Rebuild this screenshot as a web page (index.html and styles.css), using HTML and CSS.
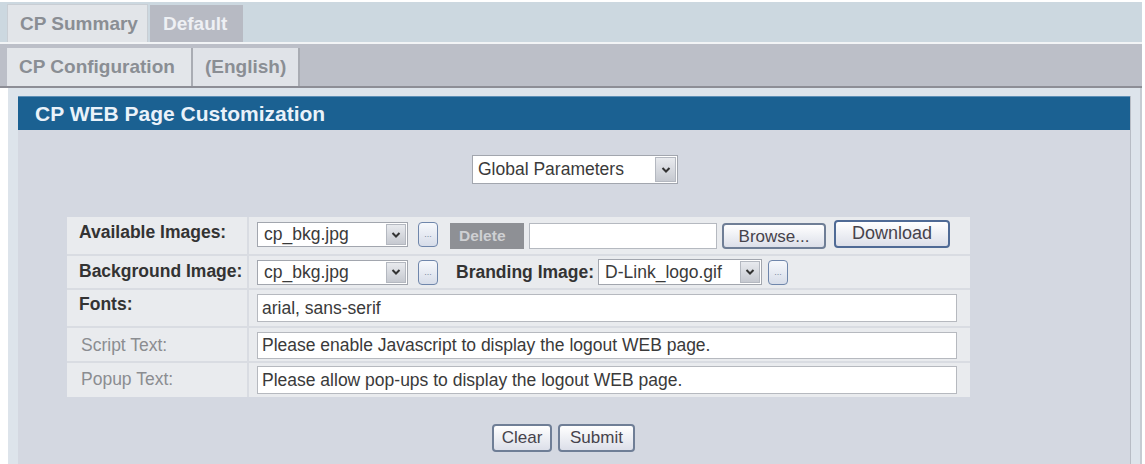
FILE: index.html
```html
<!DOCTYPE html>
<html>
<head>
<meta charset="utf-8">
<link rel="stylesheet" href="styles.css">
</head>
<body>
<div class="page">
  <div class="tabrow top">
    <div class="tab tab-summary">CP Summary</div>
    <div class="tab tab-default">Default</div>
  </div>
  <div class="tabrow sub">
    <div class="tab tab-config">CP Configuration</div>
    <div class="tab tab-lang">(English)</div>
  </div>
  <div class="panel">
    <div class="panel-inner">
      <div class="panel-head">CP WEB Page Customization</div>
      <div class="panel-body">
        <div class="center-row">
          <div class="sel sel-global"><span class="sel-text">Global Parameters</span><span class="sel-arrow"><svg width="10" height="8" viewBox="0 0 10 8"><path d="M1.5 2 L5 5.5 L8.5 2" fill="none" stroke="#333" stroke-width="2"/></svg></span></div>
        </div>
        <div class="form">
          <div class="row r1">
            <div class="lbl">Available Images:</div>
            <div class="val">
              <div class="sel sel-img"><span class="sel-text">cp_bkg.jpg</span><span class="sel-arrow"><svg width="10" height="8" viewBox="0 0 10 8"><path d="M1.5 2 L5 5.5 L8.5 2" fill="none" stroke="#333" stroke-width="2"/></svg></span></div>
              <span class="dots">...</span>
              <span class="btn-delete">Delete</span>
              <span class="file-input"></span>
              <span class="btn btn-browse">Browse...</span>
              <span class="btn btn-download">Download</span>
            </div>
          </div>
          <div class="row r2">
            <div class="lbl">Background Image:</div>
            <div class="val">
              <div class="sel sel-img"><span class="sel-text">cp_bkg.jpg</span><span class="sel-arrow"><svg width="10" height="8" viewBox="0 0 10 8"><path d="M1.5 2 L5 5.5 L8.5 2" fill="none" stroke="#333" stroke-width="2"/></svg></span></div>
              <span class="dots">...</span>
              <span class="inline-lbl">Branding Image:</span>
              <div class="sel sel-brand"><span class="sel-text">D-Link_logo.gif</span><span class="sel-arrow"><svg width="10" height="8" viewBox="0 0 10 8"><path d="M1.5 2 L5 5.5 L8.5 2" fill="none" stroke="#333" stroke-width="2"/></svg></span></div>
              <span class="dots dots-brand">...</span>
            </div>
          </div>
          <div class="row r3">
            <div class="lbl">Fonts:</div>
            <div class="val"><div class="text-input">arial, sans-serif</div></div>
          </div>
          <div class="row r4">
            <div class="lbl lbl-dim">Script Text:</div>
            <div class="val"><div class="text-input">Please enable Javascript to display the logout WEB page.</div></div>
          </div>
          <div class="row r5">
            <div class="lbl lbl-dim">Popup Text:</div>
            <div class="val"><div class="text-input">Please allow pop-ups to display the logout WEB page.</div></div>
          </div>
        </div>
        <div class="actions">
          <span class="btn btn-clear">Clear</span>
          <span class="btn btn-submit">Submit</span>
        </div>
      </div>
    </div>
  </div>
</div>
</body>
</html>
```
FILE: styles.css
```css
html, body {
  margin: 0;
  padding: 0;
  background: #ffffff;
}
body {
  font-family: "Liberation Sans", Arial, sans-serif;
  width: 1145px;
  height: 464px;
  overflow: hidden;
}
.page {
  width: 1142px;
}
.tabrow {
  display: flex;
  align-items: flex-end;
  padding-left: 7px;
}
.tabrow.top {
  margin-top: 2px;
  height: 40px;
  background: #ccd8e0;
  border-bottom: 2px solid #f2f4f6;
}
.tabrow.sub {
  height: 42px;
  background: #bcbfc8;
  border-bottom: 2px solid #8d8e96;
}
.tab {
  box-sizing: border-box;
  font-weight: bold;
  font-size: 19px;
  display: flex;
  align-items: center;
  padding-left: 12px;
  white-space: nowrap;
}
.tab-summary {
  width: 141px;
  height: 38px;
  background: #e2e5e9;
  color: #8a8e94;
  border: 1px solid #c9ced4;
  border-bottom: none;
}
.tab-default {
  width: 93px;
  height: 37px;
  margin-left: 2px;
  background: #b7bac3;
  color: #eef0f4;
  padding-left: 13px;
}
.tab-config {
  width: 186px;
  height: 38px;
  background: #e3e6ea;
  color: #8a8e94;
  border-right: 2px solid #a9acb3;
}
.tab-lang {
  width: 107px;
  height: 38px;
  background: #e0e3e8;
  color: #8a8e94;
  border-right: 2px solid #a9acb3;
  padding-left: 12px;
}
.panel {
  margin-left: 8px;
  background: #dde4eb;
  padding: 8px 9px 0 10px;
  height: 376px;
  box-sizing: border-box;
  border-right: 2px solid #c6cbd2;
}
.panel-inner {
  background: #d4d8e1;
  height: 100%;
  border-right: 1px solid #b7bcc4;
}
.panel-head {
  height: 33px;
  background: #1b6192;
  color: #eaf2fa;
  font-weight: bold;
  font-size: 21px;
  display: flex;
  align-items: center;
  padding-left: 17px;
  border-top: 1px solid #5d8fb6;
  white-space: nowrap;
}
.panel-body {
  padding-top: 25px;
}
.center-row {
  display: flex;
  padding-left: 454px;
}
.sel {
  display: inline-flex;
  box-sizing: border-box;
  background: #ffffff;
  border: 1px solid #a2a6ae;
  align-items: stretch;
  font-size: 17.5px;
  color: #3a3a3a;
  flex-shrink: 0;
}
.sel-text {
  flex: 1;
  display: flex;
  align-items: center;
  padding-left: 6px;
  white-space: nowrap;
  overflow: hidden;
}
.sel-arrow {
  width: 18px;
  display: flex;
  align-items: center;
  justify-content: center;
  background: linear-gradient(#e8eaee, #c6c9d0);
  border: 1px solid #b4b8c0;
  margin: 1px;
}
.sel-global {
  width: 206px;
  height: 29px;
}
.sel-global .sel-text {
  padding-left: 5px;
}
.sel-global .sel-arrow {
  width: 19px;
  margin-left: 2px;
}
.form {
  margin-top: 33px;
  margin-left: 49px;
  width: 903px;
  display: flex;
  flex-direction: column;
  gap: 2px;
  background: #d9dce2;
}
.row {
  display: flex;
  gap: 2px;
}
.lbl {
  width: 180px;
  flex-shrink: 0;
  box-sizing: border-box;
  padding-left: 12px;
  padding-top: 5px;
  font-weight: bold;
  font-size: 17.5px;
  color: #333;
  background: #e9ebee;
  white-space: nowrap;
}
.lbl-dim {
  font-weight: normal;
  color: #8b8d91;
  padding-left: 14px;
}
.val {
  flex: 1;
  display: flex;
  align-items: center;
  padding-left: 8px;
  background: #e9ebee;
}
.r1 { height: 37px; }
.r2 { height: 32px; }
.r3 { height: 36px; }
.r4 { height: 33px; }
.r5 { height: 34px; }
.r3 .lbl { padding-top: 4px; }
.r4 .lbl { padding-top: 7px; }
.r5 .lbl { padding-top: 6px; }
.sel-img {
  width: 151px;
  height: 25px;
}
.r1 .sel-img {
  margin-top: -2px;
}
.dots {
  box-sizing: border-box;
  width: 20px;
  height: 25px;
  margin-left: 10px;
  border: 1px solid #6f86ab;
  border-radius: 4px;
  background: linear-gradient(#f6f8fc, #d7dde9);
  font-size: 9px;
  color: #7d88a0;
  display: flex;
  align-items: center;
  justify-content: center;
  line-height: 1;
  flex-shrink: 0;
}
.r1 .dots {
  margin-top: -2px;
}
.btn-delete {
  margin-left: 12px;
  width: 74px;
  height: 26px;
  background: #8e9095;
  color: #cfd0d3;
  font-weight: bold;
  font-size: 15.5px;
  display: flex;
  align-items: center;
  padding-left: 9px;
  box-sizing: border-box;
  flex-shrink: 0;
}
.file-input {
  margin-left: 5px;
  width: 188px;
  height: 26px;
  box-sizing: border-box;
  background: #ffffff;
  border: 1px solid #b5b9c0;
  flex-shrink: 0;
}
.btn {
  box-sizing: border-box;
  display: inline-flex;
  align-items: center;
  justify-content: center;
  border: 2px solid #6f7e96;
  border-radius: 4px;
  background: linear-gradient(#ffffff, #dcdfe9);
  font-size: 17px;
  color: #46434c;
  flex-shrink: 0;
  white-space: nowrap;
}
.btn-browse {
  margin-left: 5px;
  width: 104px;
  height: 26px;
  padding-top: 2px;
}
.btn-download {
  margin-left: 8px;
  width: 116px;
  height: 28px;
  margin-top: -4px;
  border-color: #4f6a95;
  font-size: 18px;
}
.inline-lbl {
  margin-left: 18px;
  font-weight: bold;
  font-size: 17.5px;
  color: #333;
  margin-right: 4px;
  white-space: nowrap;
}
.sel-brand {
  width: 164px;
  height: 26px;
}
.sel-brand .sel-text {
  padding-left: 6px;
}
.dots-brand {
  margin-left: 6px;
}
.text-input {
  box-sizing: border-box;
  width: 700px;
  height: 28px;
  background: #ffffff;
  border: 1px solid #b6b9bf;
  font-size: 17.5px;
  color: #3a3a3a;
  display: flex;
  align-items: center;
  padding-left: 4px;
  white-space: nowrap;
  overflow: hidden;
}
.r4 .text-input {
  height: 27px;
  margin-top: 2px;
}
.actions {
  display: flex;
  gap: 6px;
  padding-left: 474px;
  margin-top: 27px;
}
.btn-clear {
  width: 60px;
  height: 28px;
}
.btn-submit {
  width: 77px;
  height: 28px;
}
```
